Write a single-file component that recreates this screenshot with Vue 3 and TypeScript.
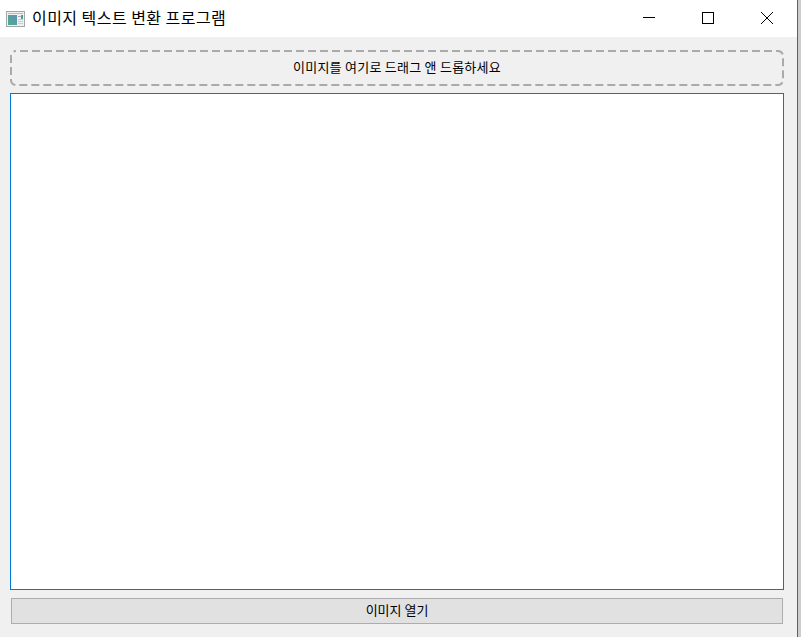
<script setup lang="ts">
const title: string = '이미지 텍스트 변환 프로그램'
</script>

<template>
  <div class="desktop">
    <div class="window">
      <header class="titlebar">
        <svg class="app-icon" width="19" height="16" viewBox="0 0 19 16">
          <defs>
            <linearGradient id="pic" x1="0" y1="1" x2="1" y2="0">
              <stop offset="0" stop-color="#4fae8a" />
              <stop offset="1" stop-color="#5f8fb5" />
            </linearGradient>
          </defs>
          <rect x="0.5" y="0.5" width="18" height="15" fill="#eef0f2" stroke="#a3a6aa" />
          <rect x="2" y="2" width="15" height="1" fill="#b4bec8" />
          <rect x="2" y="4" width="9" height="10" fill="url(#pic)" />
          <rect x="12" y="5" width="3" height="1" fill="#a6aeb6" />
          <rect x="15" y="4" width="2" height="4" fill="#4f9f80" />
          <rect x="12" y="8" width="5" height="1" fill="#c6ccd2" />
          <rect x="12" y="10" width="5" height="1" fill="#c6ccd2" />
          <rect x="12" y="12" width="5" height="1" fill="#c6ccd2" />
        </svg>
        <span class="title">{{ title }}</span>
        <div class="controls">
          <span class="ctl ctl-min">
            <svg width="12" height="12" viewBox="0 0 12 12"><path d="M0 5.5H12" stroke="#000" fill="none" /></svg>
          </span>
          <span class="ctl">
            <svg width="12" height="12" viewBox="0 0 12 12"><rect x="0.5" y="0.5" width="11" height="11" stroke="#000" fill="none" /></svg>
          </span>
          <span class="ctl">
            <svg width="12" height="12" viewBox="0 0 12 12"><path d="M0 0L12 12M12 0L0 12" stroke="#000" fill="none" /></svg>
          </span>
        </div>
      </header>
      <main class="content">
        <div class="dropzone">
          <svg class="dash" width="774" height="36" viewBox="0 0 774 36">
            <rect x="1" y="1" width="772" height="34" rx="5" ry="5" fill="none" stroke="#aaa" stroke-width="2" stroke-dasharray="8 4" stroke-dashoffset="-4" />
          </svg>
          <span class="drop-text">이미지를 여기로 드래그 앤 드롭하세요</span>
        </div>
        <div class="output"></div>
        <button class="open" type="button"><span class="btn-text">이미지 열기</span></button>
      </main>
    </div>
    <div class="edge"></div>
  </div>
</template>

<style>
html, body { margin: 0; background: #fff; }
</style>

<style scoped>
.desktop {
  width: 801px;
  height: 637px;
  display: flex;
  overflow: hidden;
  background: #fff;
}
.window {
  width: 798px;
  box-sizing: border-box;
  height: 637px;
  display: flex;
  flex-direction: column;
  background: #f0f0f0;
  border-right: 1px solid #606060;
  font-family: "Noto Sans CJK KR", "Liberation Sans", sans-serif;
  color: #000;
}
.edge {
  flex: 1;
  background: #cdcdcd;
}
.titlebar {
  height: 37px;
  flex: none;
  background: #fff;
  display: flex;
  align-items: center;
  padding-left: 6px;
}
.app-icon { flex: none; margin-right: 7px; }
.title {
  font-size: 16px;
  letter-spacing: 0.46px;
  line-height: 35px;
  height: 37px;
  flex: 1;
}
.controls { display: flex; margin-right: 1px; }
.ctl {
  width: 59px;
  height: 37px;
  box-sizing: border-box;
  padding-bottom: 1px;
  display: flex;
  align-items: center;
  justify-content: center;
}
.ctl-min { padding-left: 1px; }
.content {
  flex: 1;
  display: flex;
  flex-direction: column;
  padding: 13px 13px 13px 10px;
  min-height: 0;
}
.dropzone {
  position: relative;
  height: 36px;
  box-sizing: border-box;
  padding-bottom: 4px;
  display: flex;
  align-items: center;
  justify-content: center;
  font-size: 13px;
  letter-spacing: 0.25px;
}
.dash {
  position: absolute;
  left: 0;
  top: 0;
}
.output {
  height: 497px;
  box-sizing: border-box;
  margin-top: 7px;
  background: #fff;
  border: 1px solid #0078d7;
}
.open {
  height: 26px;
  box-sizing: border-box;
  margin: 8px 1px 0;
  padding: 0 0 4px;
  background: #e1e1e1;
  border: 1px solid #adadad;
  border-radius: 0;
  font-family: inherit;
  font-size: 13px;
  color: #000;
}
</style>
